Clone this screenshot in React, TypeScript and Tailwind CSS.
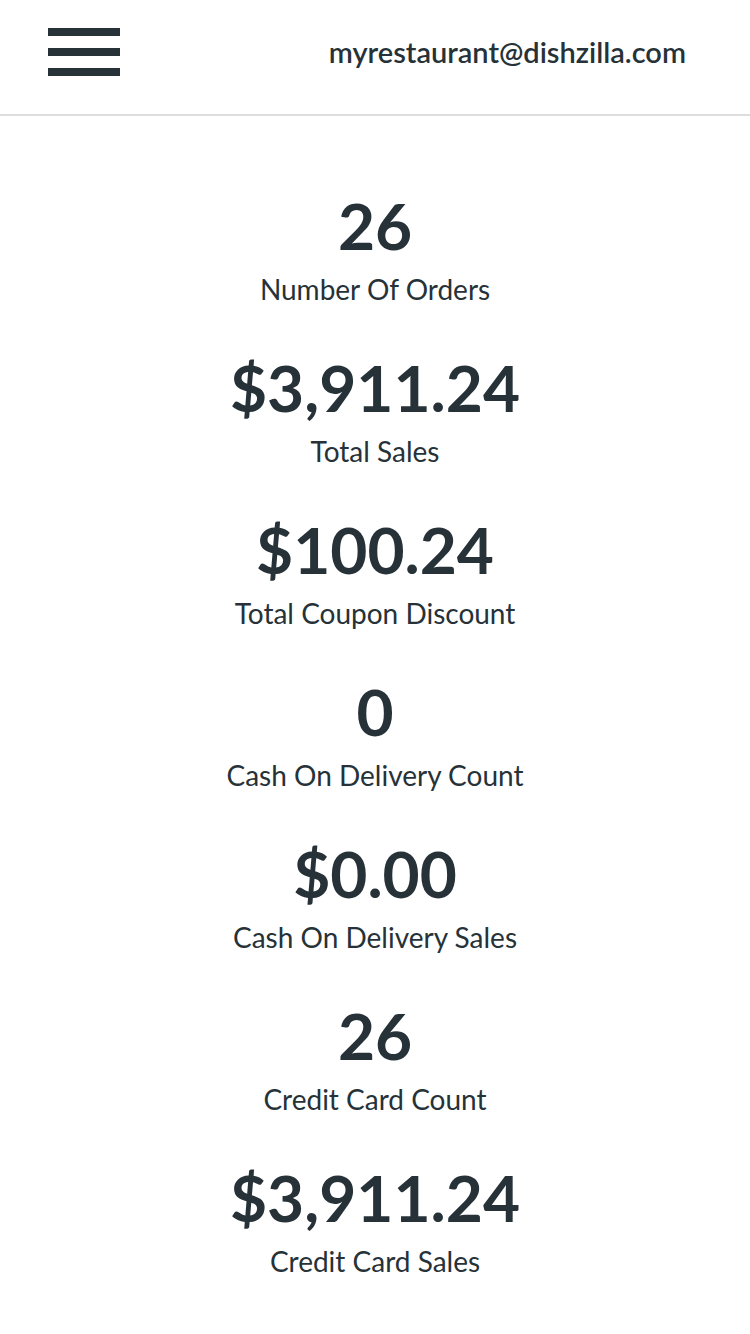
const stats = [
  { value: "26", label: "Number Of Orders" },
  { value: "$3,911.24", label: "Total Sales" },
  { value: "$100.24", label: "Total Coupon Discount" },
  { value: "0", label: "Cash On Delivery Count" },
  { value: "$0.00", label: "Cash On Delivery Sales" },
  { value: "26", label: "Credit Card Count" },
  { value: "$3,911.24", label: "Credit Card Sales" },
];

export default function App() {
  return (
    <div className="min-h-screen bg-white text-[#263238] font-['Lato',sans-serif]">
      <header className="flex h-[116px] items-center justify-between border-b-2 border-[#dddddd] pl-12 pr-16">
        <button type="button" aria-label="Menu" className="flex flex-col gap-3 pb-[10px]">
          <span className="block h-2 w-[72px] bg-[#263238]" />
          <span className="block h-2 w-[72px] bg-[#263238]" />
          <span className="block h-2 w-[72px] bg-[#263238]" />
        </button>
        <span className="pb-[10px] text-[29px] font-semibold">myrestaurant@dishzilla.com</span>
      </header>

      <main className="flex flex-col items-center pt-[71px]">
        {stats.map((stat, i) => (
          <div key={i} className="flex h-[162px] flex-col items-center">
            <p className="text-[64px] font-bold leading-[78px]">{stat.value}</p>
            <p className="mt-1 text-[28px] leading-[40px]">{stat.label}</p>
          </div>
        ))}
      </main>
    </div>
  );
}
